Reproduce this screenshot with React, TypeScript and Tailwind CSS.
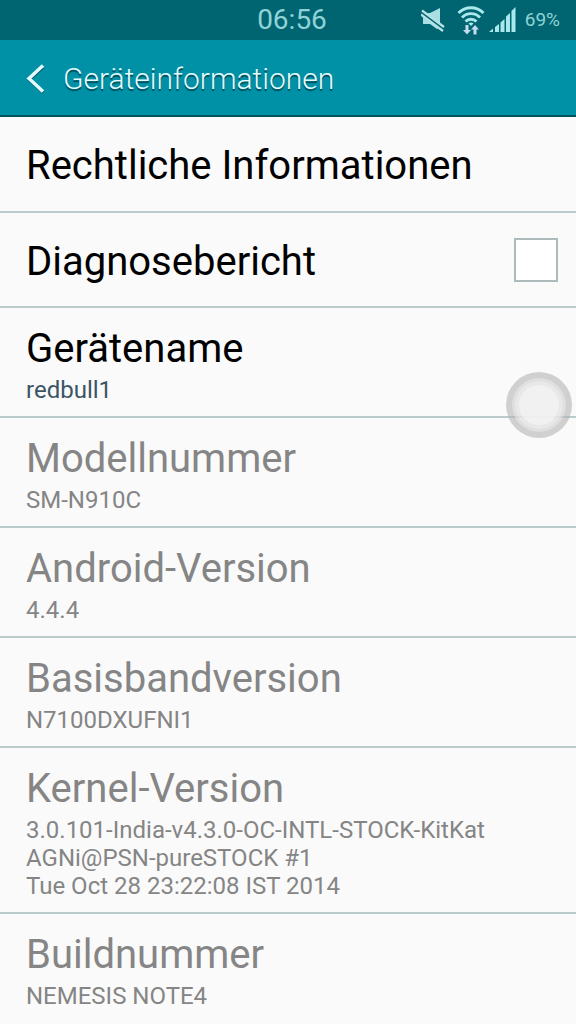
import { useState } from 'react';

interface InfoRow {
  title: string;
  lines: string[];
}

const infoRows: InfoRow[] = [
  { title: 'Modellnummer', lines: ['SM-N910C'] },
  { title: 'Android-Version', lines: ['4.4.4'] },
  { title: 'Basisbandversion', lines: ['N7100DXUFNI1'] },
  {
    title: 'Kernel-Version',
    lines: [
      '3.0.101-India-v4.3.0-OC-INTL-STOCK-KitKat',
      'AGNi@PSN-pureSTOCK #1',
      'Tue Oct 28 23:22:08 IST 2014',
    ],
  },
  { title: 'Buildnummer', lines: ['NEMESIS NOTE4'] },
];

function MuteIcon() {
  return (
    <svg width="24" height="24" viewBox="0 0 24 24" fill="none" aria-hidden="true">
      <path d="M2 5h7l10-5v20l-3 1-7-5H2z" fill="#a9dfe3" />
      <path d="M0 4.500l23 17" stroke="#006570" strokeWidth="4.500" />
      <path d="M1 2.500l22 16.500M0 6.500l22 16.500" stroke="#b4e2e6" strokeWidth="2.200" />
    </svg>
  );
}

function WifiIcon() {
  return (
    <svg width="28" height="30" viewBox="0 0 28 30" fill="none" aria-hidden="true">
      <g stroke="#a9e8ec" strokeWidth="2.900">
        <path d="M1.500 8a17.500 17.500 0 0 1 25 0" />
        <path d="M5 12.500a12.500 12.500 0 0 1 18 0" />
        <path d="M8.500 16.500a8 8 0 0 1 11 0" />
      </g>
      <path d="M11.500 18.500a4 4 0 0 1 5 0L14 21z" fill="#a9e8ec" />
      <path
        d="M8.500 20h3v5h2.500l-4 4.500-4-4.500h2.500zM16.500 29.500h3v-5H22l-4-4.500-4 4.500h2.500z"
        fill="#c4dcf0"
      />
    </svg>
  );
}

function SignalIcon() {
  return (
    <svg width="28" height="26" viewBox="0 0 28 26" fill="#a9e8ec" aria-hidden="true">
      <path d="M0 25l4-3.500V25zM6 20l4-3v8H6zM11.500 15.500l4-3.500v13h-4zM17 9.500L21 6v19h-4zM22.500 4L26.500 0v25h-4z" />
    </svg>
  );
}

function StatusBar() {
  return (
    <div className="relative flex h-10 items-center justify-end bg-[#006570] pr-4 text-[#8fd3d8]">
      <span className="absolute inset-x-0 pl-2 text-center text-[28px]">06:56</span>
      <div className="flex items-center">
        <MuteIcon />
        <span className="ml-3">
          <WifiIcon />
        </span>
        <span className="ml-1">
          <SignalIcon />
        </span>
        <span className="ml-2 text-[19px]">69%</span>
      </div>
    </div>
  );
}

function TitleBar() {
  return (
    <header className="flex h-[77px] items-center border-b-2 border-[#00525d] bg-[#0091a7] pt-0.5 pl-[26px] text-[#e4fbfd]">
      <button type="button" aria-label="Zurück" className="mr-[18px] flex">
        <svg width="19" height="30" viewBox="0 0 19 30" fill="none">
          <path d="M17 3.500L3 16l14 12.500" stroke="#00525d" strokeWidth="2.500" />
          <path d="M17 1.500L3 14.500l14 13" stroke="#e4fbfd" strokeWidth="3.500" />
        </svg>
      </button>
      <h1 className="text-[30px] font-light [text-shadow:0_2px_1px_#004a55]">Geräteinformationen</h1>
    </header>
  );
}

function TextRow({ title, lines }: InfoRow) {
  return (
    <li className="border-b-2 border-[#b9cbca] px-[26px] pt-[17px] pb-3 text-[#858585] last:border-b-0">
      <h2 className="text-[40px] leading-[48px]">{title}</h2>
      <div className="mt-[3px] text-[24px] leading-[28px]">
        {lines.map((line) => (
          <p key={line}>{line}</p>
        ))}
      </div>
    </li>
  );
}

export default function App() {
  const [report, setReport] = useState(false);

  return (
    <div className="relative h-screen overflow-hidden bg-[#fafafa] font-[Roboto,sans-serif]">
      <StatusBar />
      <TitleBar />
      <ul>
        <li className="border-b-2 border-[#b9cbca]">
          <button
            type="button"
            className="flex h-[94px] w-full items-center px-[26px] pt-1 text-left text-[40px] leading-[48px] text-black"
          >
            Rechtliche Informationen
          </button>
        </li>
        <li className="border-b-2 border-[#b9cbca]">
          <div className="flex h-[93px] items-center justify-between pr-[18px] pl-[26px]">
            <label htmlFor="report" className="pt-1 text-[40px] leading-[48px] text-black">
              Diagnosebericht
            </label>
            <input
              id="report"
              type="checkbox"
              checked={report}
              onChange={(e) => setReport(e.target.checked)}
              className="size-11 appearance-none border-2 border-[#aebbbb] bg-white checked:bg-[#0091a7]"
            />
          </div>
        </li>
        <li className="border-b-2 border-[#b9cbca]">
          <button type="button" className="block w-full px-[26px] pt-[17px] pb-3 text-left">
            <span className="block text-[40px] leading-[48px] text-black">Gerätename</span>
            <span className="mt-[3px] block text-[24px] leading-[28px] text-[#3b5565]">redbull1</span>
          </button>
        </li>
        {infoRows.map((row) => (
          <TextRow key={row.title} {...row} />
        ))}
      </ul>

      {/* Floating assistive button */}
      <button
        type="button"
        aria-label="Schnellmenü"
        className="absolute top-[372px] right-1 flex size-[66px] items-center justify-center rounded-full bg-[#b4b4b4]/60"
      >
        <span className="flex size-[54px] items-center justify-center rounded-full bg-[#eeeeee]/50">
          <span className="flex size-[48px] items-center justify-center rounded-full bg-[#f4f4f4]/40">
            <span className="size-[40px] rounded-full bg-[#f6f6f6]/60" />
          </span>
        </span>
      </button>
    </div>
  );
}
